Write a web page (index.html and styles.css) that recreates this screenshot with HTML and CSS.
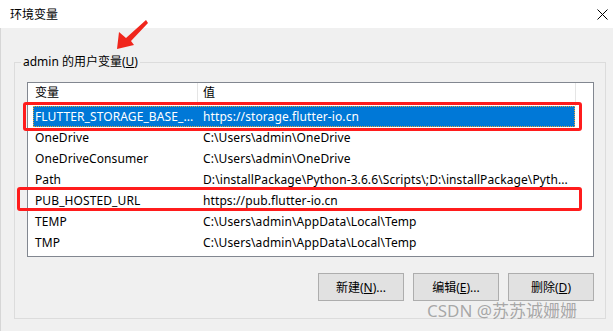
FILE: index.html
```html
<!DOCTYPE html>
<html lang="zh-CN">
<head>
  <meta charset="UTF-8">
  <title>环境变量</title>
  <link rel="stylesheet" href="styles.css">
</head>
<body>

  <div class="titlebar">
    <span class="title">环境变量</span>
    <svg class="close" width="11" height="11" viewBox="0 0 11 11">
      <path d="M0.5 0.5 L10.5 10.5 M10.5 0.5 L0.5 10.5" stroke="#000" stroke-width="1" fill="none"/>
    </svg>
  </div>

  <fieldset class="group">
    <legend>admin 的用户变量(<u>U</u>)</legend>

    <div class="list">
      <div class="list-head">
        <div class="head-name">变量</div>
        <div class="head-value">值</div>
      </div>
      <div class="row selected">
        <div class="cell-name">FLUTTER_STORAGE_BASE_...</div>
        <div class="cell-value">https://storage.flutter-io.cn</div>
      </div>
      <div class="row">
        <div class="cell-name">OneDrive</div>
        <div class="cell-value">C:\Users\admin\OneDrive</div>
      </div>
      <div class="row">
        <div class="cell-name">OneDriveConsumer</div>
        <div class="cell-value">C:\Users\admin\OneDrive</div>
      </div>
      <div class="row">
        <div class="cell-name">Path</div>
        <div class="cell-value">D:\installPackage\Python-3.6.6\Scripts\;D:\installPackage\Pyth...</div>
      </div>
      <div class="row">
        <div class="cell-name">PUB_HOSTED_URL</div>
        <div class="cell-value">https://pub.flutter-io.cn</div>
      </div>
      <div class="row">
        <div class="cell-name">TEMP</div>
        <div class="cell-value">C:\Users\admin\AppData\Local\Temp</div>
      </div>
      <div class="row">
        <div class="cell-name">TMP</div>
        <div class="cell-value">C:\Users\admin\AppData\Local\Temp</div>
      </div>
    </div>

    <div class="buttons">
      <button>新建(<u>N</u>)...</button>
      <button>编辑(<u>E</u>)...</button>
      <button>删除(<u>D</u>)</button>
    </div>
  </fieldset>

  <!-- 标注 -->
  <svg class="arrow" width="613" height="60" viewBox="0 0 613 60">
    <polygon points="146,20 148,23 131,41 134,45 117,49 119,32 126,38" fill="#f0261c"/>
  </svg>
  <div class="mark mark-1"></div>
  <div class="mark mark-2"></div>
  <div class="watermark">CSDN @苏苏诚姗姗</div>

</body>
</html>
```

FILE: styles.css
```css
html, body {
  margin: 0;
}

body {
  position: relative;
  width: 613px;
  height: 331px;
  overflow: hidden;
  background: #f0f0f0;
  font-family: "Noto Sans", "Noto Sans CJK SC", sans-serif;
  font-size: 12px;
  color: #000;
  box-shadow: inset 1px 0 0 #d6d6d6;
}

.titlebar {
  height: 28px;
  background: #fff;
  display: flex;
  align-items: center;
  justify-content: space-between;
  padding: 0 5px 0 10px;
}

.group {
  margin: 26px 7px 0 14px;
  padding: 12px 11px 17px 12px;
  border: 1px solid #dcdcdc;
  min-width: 0;
}

.group legend {
  padding: 0 2px;
  margin-left: -6px;
  line-height: 16px;
}

.list {
  background: #fff;
  border: 1px solid #828790;
  height: 173px;
}

.list-head {
  display: flex;
  height: 23px;
  line-height: 20px;
}

.head-name {
  width: 170px;
  padding-left: 7px;
  border-right: 1px solid #e5e5e5;
  box-sizing: border-box;
}

.head-value {
  width: 378px;
  padding-left: 5px;
  border-right: 1px solid #e5e5e5;
  box-sizing: border-box;
}

.row {
  display: flex;
  height: 21px;
  line-height: 21px;
  margin-left: 5px;
  width: 542px;
  white-space: nowrap;
  letter-spacing: 0.1px;
}

.cell-name {
  width: 164px;
  padding-left: 2px;
  box-sizing: border-box;
  overflow: hidden;
}

.cell-value {
  flex: 1;
  padding-left: 6px;
  overflow: hidden;
}

.row.selected {
  background: #0078d7;
  color: #fff;
  outline: 1px dotted #e8a33d;
  outline-offset: -1px;
}

.buttons {
  display: flex;
  justify-content: flex-end;
  gap: 9px;
  margin-top: 16px;
}

.buttons button {
  width: 86px;
  height: 28px;
  padding: 0;
  background: #e1e1e1;
  border: 1px solid #adadad;
  font: inherit;
  color: #000;
}

/* 标注层 */
.arrow {
  position: absolute;
  left: 0;
  top: 0;
}

.mark {
  position: absolute;
  border: 3px solid #ff1c1c;
  border-radius: 3px;
}

.mark-1 {
  left: 23px;
  top: 102px;
  width: 553px;
  height: 23px;
}

.mark-2 {
  left: 17px;
  top: 187px;
  width: 559px;
  height: 18px;
}

.watermark {
  position: absolute;
  left: 427px;
  top: 299px;
  font-size: 17px;
  line-height: 24px;
  color: rgba(105, 105, 105, 0.55);
  white-space: nowrap;
}
```
